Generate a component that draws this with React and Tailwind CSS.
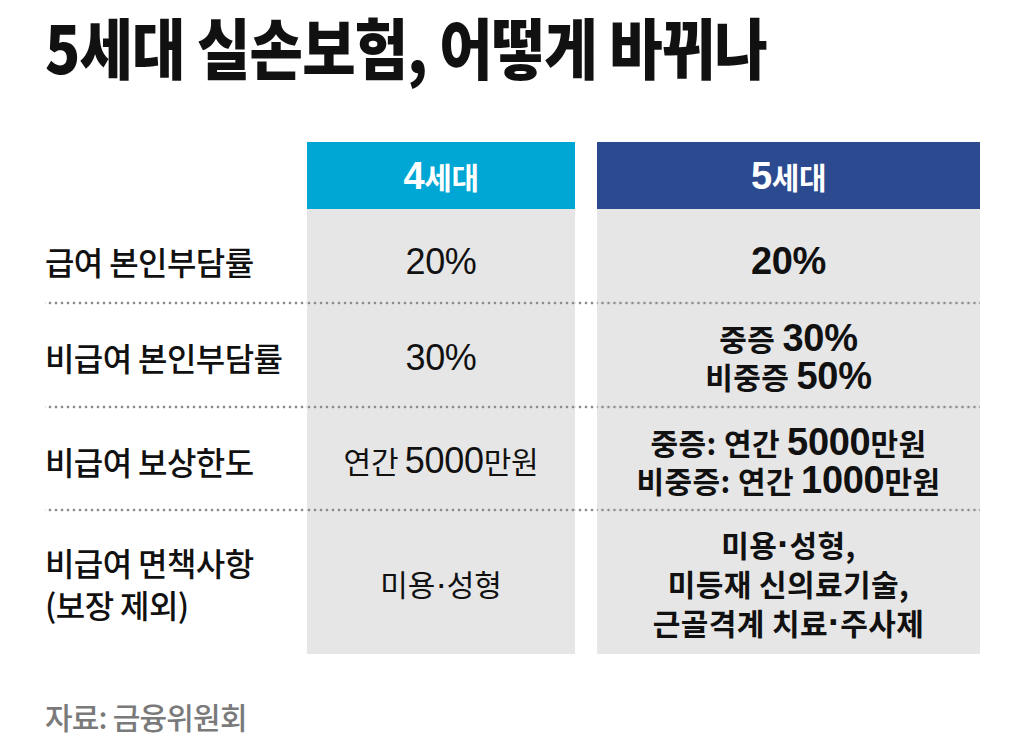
const font = { fontFamily: '"Noto Sans CJK KR", "Noto Sans", sans-serif' };

const dots =
  'bg-[radial-gradient(circle,#8c8c8c_1.1px,transparent_1.7px)] bg-[length:6px_4px] bg-repeat-x bg-bottom';

const numRegular = "font-['Liberation_Sans',sans-serif] text-[36px] tracking-[-0.3px]";
const numBold = "font-['Liberation_Sans',sans-serif] text-[38px] tracking-[-0.3px]";

const rows = [
  { label: ['급여 본인부담률'], g4: ['20%'], g5: ['20%'], h: 'h-[96px] pt-[8px]', lead: 'leading-[38px]' },
  { label: ['비급여 본인부담률'], g4: ['30%'], g5: ['중증 30%', '비중증 50%'], h: 'h-[104px]', lead: 'leading-[38px]' },
  {
    label: ['비급여 보상한도'],
    g4: ['연간 5000만원'],
    g5: ['중증: 연간 5000만원', '비중증: 연간 1000만원'],
    h: 'h-[103px]',
    lead: 'leading-[38px]',
  },
  {
    label: ['비급여 면책사항', '(보장 제외)'],
    g4: ['미용·성형'],
    g5: ['미용·성형,', '미등재 신의료기술,', '근골격계 치료·주사제'],
    h: 'h-[142px]',
    lead: 'leading-[39px]',
    last: true,
  },
];

// digits and the middle dot come from a Latin face, a bit larger, like the original
function Txt({ text, num = numRegular }) {
  return text.split(/([0-9%·]+)/).map((p, i) =>
    /[0-9%·]/.test(p) ? (
      <span key={i} className={num}>
        {p}
      </span>
    ) : (
      p
    )
  );
}

function Lines({ items, className, num }) {
  return (
    <div className={className}>
      {items.map((t, i) => (
        <div key={i}>
          <Txt text={t} num={num} />
        </div>
      ))}
    </div>
  );
}

export default function App() {
  return (
    <div className="w-[1024px] h-[753px] bg-white overflow-hidden text-[#111]" style={font}>
      {/* title */}
      <div className="pt-[10px] pl-[45px] h-[142px]">
        <h1 className="inline-block origin-left scale-x-[0.88] text-[66px] leading-[70px] font-black tracking-[-1px] whitespace-nowrap">
          5세대 실손보험, 어떻게 바뀌나
        </h1>
      </div>

      {/* table */}
      <div className="ml-[45px] grid grid-cols-[262px_268px_22px_383px]">
        <div />
        <div className="h-[67px] bg-[#00a6d4] flex items-center justify-center text-white text-[30px] leading-[38px] font-bold tracking-[-0.5px]">
          <div>
            <Txt text="4세대" num={numBold} />
          </div>
        </div>
        <div />
        <div className="h-[67px] bg-[#2b4a8f] flex items-center justify-center text-white text-[30px] leading-[38px] font-bold tracking-[-0.5px]">
          <div>
            <Txt text="5세대" num={numBold} />
          </div>
        </div>

        {rows.map((r, i) => {
          const d = r.last ? '' : dots;
          return [
            <div key={i + 'a'} className={`${r.h} ${d} flex items-center`}>
              <Lines items={r.label} className="text-[32px] leading-[42px] font-medium tracking-[-0.6px]" />
            </div>,
            <div key={i + 'b'} className={`${r.h} ${d} bg-[#e6e6e6] flex items-center justify-center`}>
              <Lines items={r.g4} num={numRegular} className={`text-[30px] ${r.lead} tracking-[-0.2px] text-center`} />
            </div>,
            <div key={i + 'c'} className={`${r.h} ${d}`} />,
            <div key={i + 'd'} className={`${r.h} ${d} bg-[#e6e6e6] flex items-center justify-center`}>
              <Lines items={r.g5} num={numBold} className={`text-[30px] ${r.lead} font-bold tracking-[0.4px] text-center`} />
            </div>,
          ];
        })}
      </div>

      {/* source */}
      <div className="pl-[45px] pt-[44px] text-[30px] leading-[36px] text-[#7a7a7a] tracking-[-0.8px] font-medium">
        자료: 금융위원회
      </div>
    </div>
  );
}
